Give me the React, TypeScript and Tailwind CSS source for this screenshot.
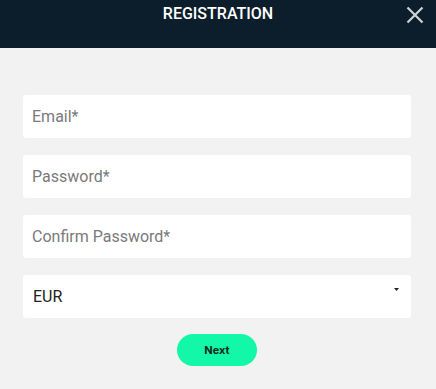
import React from "react";

const FIELDS = ["Email*", "Password*", "Confirm Password*"];

export default function App() {
  return (
    <div className="w-[436px] h-[389px] bg-[#f2f2f2] font-['Roboto',sans-serif]">
      <div className="relative h-[48px] bg-[#0c1e2b] flex justify-center">
        <h2 className="mt-[4px] text-[16px] leading-[20px] font-medium text-white">REGISTRATION</h2>
        <button className="absolute left-[406px] top-[6px] w-[18px] h-[18px] text-[#d0d3d6]">
          <svg viewBox="0 0 18 18" width="18" height="18" fill="none" stroke="currentColor" strokeWidth="2.2">
            <path d="M1.5 1.5 L16.5 16.5 M16.5 1.5 L1.5 16.5" />
          </svg>
        </button>
      </div>
      <div className="pl-[23px] pr-[25px] pt-[47px] flex flex-col gap-[17px]">
        {FIELDS.map((f) => (
          <input
            key={f}
            placeholder={f}
            type={f.startsWith("Email") ? "text" : "password"}
            className="h-[43px] w-full rounded-[3px] bg-white px-[9px] text-[16px] text-[#222] placeholder:text-[#7a7a7a] outline-none"
          />
        ))}
        <div className="relative h-[43px] rounded-[3px] bg-white px-[10px] flex items-center text-[16px] text-[#222]">
          <span className="mt-[1px]">EUR</span>
          <svg className="absolute right-[12px] top-[13px]" width="5" height="3" viewBox="0 0 5 3">
            <path d="M0 0 H5 L2.5 3 Z" fill="#222" />
          </svg>
        </div>
      </div>
      <div className="flex justify-center mt-[16px] pr-[2px]">
        <button className="w-[80px] h-[32px] rounded-full bg-[#13f8a8] text-[11px] font-bold text-[#0c2a20] font-['Inter',sans-serif]">
          Next
        </button>
      </div>
    </div>
  );
}
